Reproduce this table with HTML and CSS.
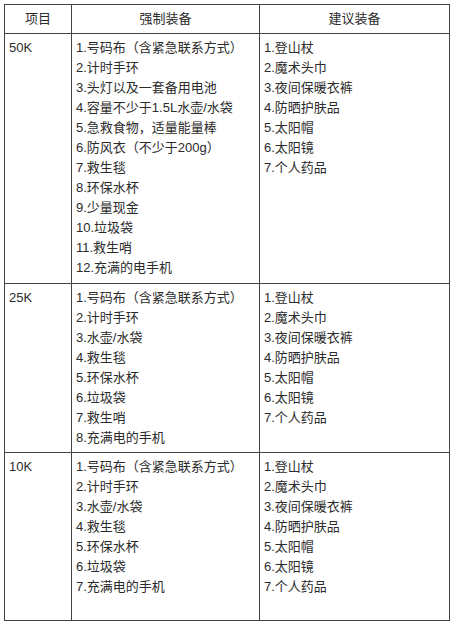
FILE: index.html
```html
<!DOCTYPE html>
<html lang="zh-CN">
<head>
<meta charset="utf-8">
<title>装备清单</title>
<link rel="stylesheet" href="styles.css">
</head>
<body>
<table class="gear">
  <colgroup>
    <col class="c1"><col class="c2"><col class="c3">
  </colgroup>
  <thead>
    <tr><th>项目</th><th>强制装备</th><th>建议装备</th></tr>
  </thead>
  <tbody>
    <tr class="first">
      <td>50K</td>
      <td>
        <p>1.号码布（含紧急联系方式）</p>
        <p>2.计时手环</p>
        <p>3.头灯以及一套备用电池</p>
        <p>4.容量不少于1.5L水壶/水袋</p>
        <p>5.急救食物，适量能量棒</p>
        <p>6.防风衣（不少于200g）</p>
        <p>7.救生毯</p>
        <p>8.环保水杯</p>
        <p>9.少量现金</p>
        <p>10.垃圾袋</p>
        <p>11.救生哨</p>
        <p>12.充满的电手机</p>
      </td>
      <td>
        <p>1.登山杖</p>
        <p>2.魔术头巾</p>
        <p>3.夜间保暖衣裤</p>
        <p>4.防晒护肤品</p>
        <p>5.太阳帽</p>
        <p>6.太阳镜</p>
        <p>7.个人药品</p>
      </td>
    </tr>
    <tr>
      <td>25K</td>
      <td>
        <p>1.号码布（含紧急联系方式）</p>
        <p>2.计时手环</p>
        <p>3.水壶/水袋</p>
        <p>4.救生毯</p>
        <p>5.环保水杯</p>
        <p>6.垃圾袋</p>
        <p>7.救生哨</p>
        <p>8.充满电的手机</p>
      </td>
      <td>
        <p>1.登山杖</p>
        <p>2.魔术头巾</p>
        <p>3.夜间保暖衣裤</p>
        <p>4.防晒护肤品</p>
        <p>5.太阳帽</p>
        <p>6.太阳镜</p>
        <p>7.个人药品</p>
      </td>
    </tr>
    <tr>
      <td>10K</td>
      <td>
        <p>1.号码布（含紧急联系方式）</p>
        <p>2.计时手环</p>
        <p>3.水壶/水袋</p>
        <p>4.救生毯</p>
        <p>5.环保水杯</p>
        <p>6.垃圾袋</p>
        <p>7.充满电的手机</p>
        <p class="blank">&nbsp;</p>
      </td>
      <td>
        <p>1.登山杖</p>
        <p>2.魔术头巾</p>
        <p>3.夜间保暖衣裤</p>
        <p>4.防晒护肤品</p>
        <p>5.太阳帽</p>
        <p>6.太阳镜</p>
        <p>7.个人药品</p>
      </td>
    </tr>
  </tbody>
</table>
</body>
</html>
```
FILE: styles.css
```css
html, body {
  margin: 0;
  padding: 0;
  background: #fff;
}
body {
  padding: 4px;
  font-family: "Liberation Sans", "Noto Sans CJK SC", sans-serif;
  font-size: 13px;
  line-height: 20px;
  color: #2b2b2b;
}
.gear {
  border-collapse: collapse;
  width: 446px;
  table-layout: fixed;
}
.c1 { width: 67px; }
.c2 { width: 188px; }
.c3 { width: 190px; }
.gear th,
.gear td {
  border: 1px solid #444;
  padding: 4px;
  vertical-align: top;
  text-align: left;
  font-weight: normal;
}
.gear th {
  text-align: center;
}
.gear .first td {
  padding-bottom: 5px;
}
.gear p {
  margin: 0;
  white-space: nowrap;
}
.gear .blank {
  line-height: 19px;
}
```
